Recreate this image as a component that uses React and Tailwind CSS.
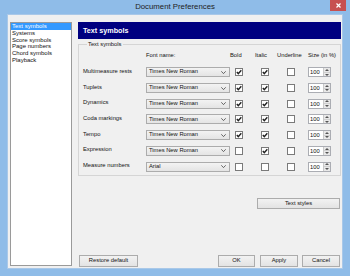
const SECTIONS = ['Text symbols', 'Systems', 'Score symbols', 'Page numbers', 'Chord symbols', 'Playback'];

const ROWS = [
  { label: 'Multimeasure rests', font: 'Times New Roman', bold: true, italic: true },
  { label: 'Tuplets', font: 'Times New Roman', bold: true, italic: true },
  { label: 'Dynamics', font: 'Times New Roman', bold: true, italic: true },
  { label: 'Coda markings', font: 'Times New Roman', bold: true, italic: true },
  { label: 'Tempo', font: 'Times New Roman', bold: true, italic: true },
  { label: 'Expression', font: 'Times New Roman', bold: false, italic: true },
  { label: 'Measure numbers', font: 'Arial', bold: false, italic: false },
];

function Check({ checked }) {
  return (
    <span className="w-[8px] h-[8px] border border-[#7a7a7a] bg-white flex items-center justify-center">
      {checked && (
        <svg width="6" height="6" viewBox="0 0 6 6">
          <path d="M0.8 3 L2.3 4.6 L5.3 1.2" fill="none" stroke="#222" strokeWidth="1.4" />
        </svg>
      )}
    </span>
  );
}

function Combo({ value }) {
  return (
    <div className="w-[84px] h-[10px] border border-[#acacac] bg-linear-to-b from-[#f3f3f3] to-[#e4e4e4] flex items-center pl-[2px] pr-[3px]">
      <span className="flex-1 leading-none">{value}</span>
      <svg width="5" height="3" viewBox="0 0 5 3">
        <path d="M0.3 0.3 L2.5 2.6 L4.7 0.3" fill="none" stroke="#444" strokeWidth="0.8" />
      </svg>
    </div>
  );
}

function Spinner() {
  return (
    <div className="w-[23px] h-[10px] flex border border-[#abadb3] bg-white">
      <span className="flex-1 leading-[8px] pl-[1px]">100</span>
      <div className="w-[7px] flex flex-col border-l border-[#c9c9c9] bg-[#e8e8e8]">
        <div className="flex-1 flex items-center justify-center border-b border-[#cfcfcf]">
          <svg width="4" height="2" viewBox="0 0 4 2"><path d="M0 2 L2 0 L4 2 Z" fill="#555" /></svg>
        </div>
        <div className="flex-1 flex items-center justify-center">
          <svg width="4" height="2" viewBox="0 0 4 2"><path d="M0 0 L2 2 L4 0 Z" fill="#555" /></svg>
        </div>
      </div>
    </div>
  );
}

function Btn({ children, className = '' }) {
  return (
    <button className={`h-[12px] border border-[#acacac] bg-linear-to-b from-[#f2f2f2] to-[#e3e3e3] text-[5.8px] leading-none text-[#111] flex items-center justify-center ${className}`}>
      {children}
    </button>
  );
}

export default function App() {
  return (
    <div className="w-[350px] h-[276px] bg-[#8fbce8] flex flex-col font-['Liberation_Sans',Arial,sans-serif] text-[#111] overflow-hidden">
      {/* title bar */}
      <div className="relative h-[14px] flex items-center justify-center">
        <span className="text-[7.8px] text-[#222] leading-none">Document Preferences</span>
        <div className="absolute right-[4px] top-0 w-[16px] h-[11px] bg-[#c75050] flex items-center justify-center">
          <svg width="5" height="5" viewBox="0 0 5 5">
            <path d="M0.5 0.5 L4.5 4.5 M4.5 0.5 L0.5 4.5" stroke="#fff" strokeWidth="1.2" />
          </svg>
        </div>
      </div>

      {/* client */}
      <div className="mx-[7px] mb-[7px] flex-1 border border-[#a9c8e8] bg-[#f0f0f0] flex pt-[7px] pl-[2px] pr-[1px] pb-[1px] text-[5.8px]">
        {/* section list */}
        <ul className="w-[62px] mb-[1px] border border-[#9a9a9a] bg-white">
          {SECTIONS.map((s, i) => (
            <li
              key={s}
              className={`h-[6.8px] leading-[6.8px] pl-[1px] text-[6px] ${i === 0 ? 'bg-[#3399ff] text-white' : 'text-[#111]'}`}
            >
              {s}
            </li>
          ))}
        </ul>

        {/* right panel */}
        <div className="ml-[6px] flex-1 flex flex-col">
          <div className="h-[17px] bg-[#000080] flex items-center pl-[5px]">
            <span className="text-white font-bold text-[7.2px] leading-none">Text symbols</span>
          </div>

          <fieldset className="mt-[1.5px] border border-[#d5d5d5] pl-[4px] pt-[4.5px] pb-[3.5px]">
            <legend className="ml-[4px] px-[1px] leading-[7px]">Text symbols</legend>

            <div className="flex h-[7px] leading-[7px] items-center">
              <span className="w-[63px]" />
              <span className="w-[84px]">Font name:</span>
              <span className="w-[25px]">Bold</span>
              <span className="w-[22px]">Italic</span>
              <span className="w-[31px]">Underline</span>
              <span>Size (in %)</span>
            </div>

            <div className="mt-[8.3px] flex flex-col gap-[5.73px]">
              {ROWS.map((r) => (
                <div key={r.label} className="flex items-center h-[10px]">
                  <span className="w-[63px] leading-none -mt-[1px]">{r.label}</span>
                  <Combo value={r.font} />
                  <span className="w-[26px] pl-[5px]"><Check checked={r.bold} /></span>
                  <span className="w-[26px] pl-[5px]"><Check checked={r.italic} /></span>
                  <span className="w-[26px] pl-[5px]"><Check checked={false} /></span>
                  <Spinner />
                </div>
              ))}
            </div>
          </fieldset>

          <Btn className="self-end mr-[1px] mt-[22px] w-[83px] !h-[11px]">Text styles</Btn>

          <div className="mt-auto flex">
            <Btn className="ml-[1px] w-[59px] border-[#7eb4ea]">Restore default</Btn>
            <Btn className="ml-auto w-[37px]">OK</Btn>
            <Btn className="ml-[5px] w-[38px]">Apply</Btn>
            <Btn className="ml-[4px] mr-[1px] w-[38px]">Cancel</Btn>
          </div>
        </div>
      </div>
    </div>
  );
}
